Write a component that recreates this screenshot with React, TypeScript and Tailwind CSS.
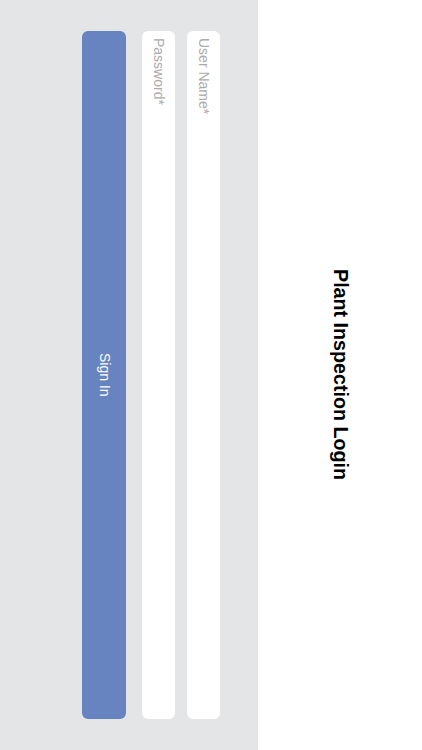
import React from 'react';

const App: React.FC = () => {
  return (
    <div className="flex h-[750px] w-[422px] font-['Liberation_Sans',Arial,sans-serif]">
      {/* Form panel */}
      <div className="flex h-full w-[258px] gap-3 bg-[#e4e5e7] py-[31px] pl-[82px] pr-[38px]">
        <button className="mr-1 flex w-[44px] items-center justify-center rounded-md bg-[#6884c0] text-[14px] text-white">
          <span className="[writing-mode:vertical-rl]">Sign In</span>
        </button>
        <div className="flex w-[33px] justify-center rounded-md bg-white pt-[7px]">
          <span className="text-[14px] text-[#ababab] [writing-mode:vertical-rl]">Password*</span>
        </div>
        <div className="flex w-[33px] justify-center rounded-md bg-white pt-[7px]">
          <span className="text-[14px] text-[#ababab] [writing-mode:vertical-rl]">User Name*</span>
        </div>
      </div>

      {/* Title */}
      <div className="flex flex-1 items-center justify-center bg-white">
        <h1 className="text-[19.7px] font-bold text-black [writing-mode:vertical-rl]">Plant Inspection Login</h1>
      </div>
    </div>
  );
};

export default App;
